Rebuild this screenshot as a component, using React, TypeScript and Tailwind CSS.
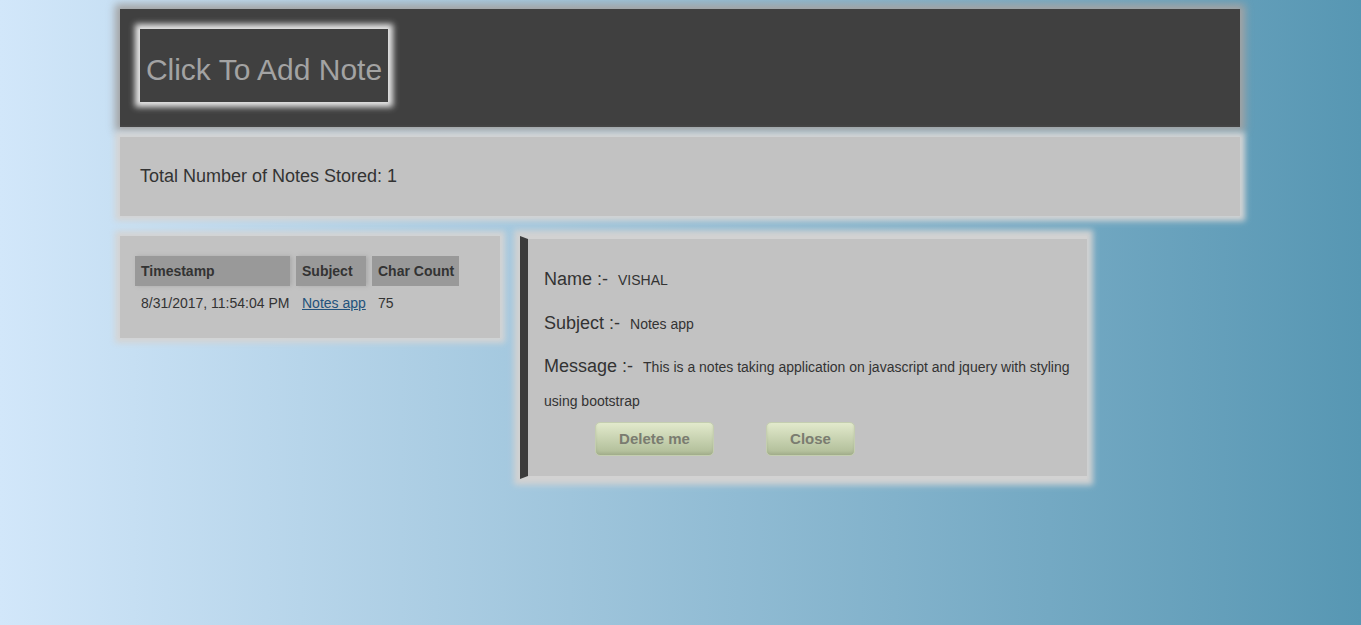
export default function App() {
  const font = { fontFamily: '"Liberation Sans", Arial, sans-serif' };

  return (
    <div
      className="min-h-[625px] w-full bg-gradient-to-r from-[#d2e7fa] to-[#5797b3] pt-[9px]"
      style={font}
    >
      <div className="ml-[120px] w-[1120px]">
        {/* header */}
        <div className="h-[118px] bg-[#404040] shadow-[0_0_8px_5px_#a3a3a3] px-5 pt-5">
          <button className="h-[73px] w-[248px] bg-[#404040] text-[30px] text-[#a3a3a3] pt-2 shadow-[0_0_6px_5px_#e6e6e6]">
            Click To Add Note
          </button>
        </div>

        {/* count */}
        <div className="mt-[10px] h-[79px] bg-[#c2c2c2] shadow-[0_0_6px_5px_#d4d4d4] flex items-center px-5">
          <span className="text-[18px] text-[#333]">Total Number of Notes Stored: 1</span>
        </div>

        <div className="mt-5 flex items-start">
          {/* list */}
          <div className="w-[380px] h-[102px] bg-[#c2c2c2] shadow-[0_0_6px_5px_#d4d4d4] pl-[15px] pt-5 whitespace-nowrap">
            <div className="flex gap-[6px] text-[14px] font-bold text-[#333]">
              <div className="w-[155px] h-[30px] bg-[#999] flex items-center px-[6px] shadow-[2px_0_4px_#aaa]">Timestamp</div>
              <div className="w-[70px] h-[30px] bg-[#999] flex items-center px-[6px] shadow-[2px_0_4px_#aaa]">Subject</div>
              <div className="w-[87px] h-[30px] bg-[#999] flex items-center px-[6px]">Char Count</div>
            </div>
            <div className="flex gap-[6px] text-[14px] text-[#333] mt-[7px]">
              <div className="w-[155px] px-[6px]">8/31/2017, 11:54:04 PM</div>
              <div className="w-[70px] px-[6px]">
                <a className="underline text-[#23527c]" href="#">Notes app</a>
              </div>
              <div className="w-[87px] px-[6px]">75</div>
            </div>
          </div>

          {/* detail */}
          <div className="ml-5 w-[567px] h-[243px] bg-[#c2c2c2] border-l-[8px] border-l-[#3c3c3c] border-y-[3px] border-y-[#d2d2d2] border-r-0 shadow-[0_0_6px_6px_#d2d2d2] pl-4 pr-4 pt-[27px] text-[#333]">
            <div className="flex items-baseline h-[26px]">
              <span className="text-[18px]">Name :-</span>
              <span className="text-[14px] ml-[10px]">VISHAL</span>
            </div>
            <div className="flex items-baseline h-[26px] mt-[18px]">
              <span className="text-[18px]">Subject :-</span>
              <span className="text-[14px] ml-[10px]">Notes app</span>
            </div>
            <div className="mt-[13px] leading-[34px]">
              <span className="text-[18px]">Message :-</span>
              <span className="text-[14px] ml-[10px]">
                This is a notes taking application on javascript and jquery with styling using bootstrap
              </span>
            </div>
            <div className="flex mt-[4px] pl-[51px] gap-[52px]">
              <button className="w-[119px] h-[34px] rounded-[5px] bg-gradient-to-b from-[#e2eacc] to-[#aebb96] border border-[#c4ceb0] text-[15px] font-bold text-[#7a7c70] shadow-[inset_0_-2px_3px_rgba(0,0,0,0.08)]">
                Delete me
              </button>
              <button className="w-[89px] h-[34px] rounded-[5px] bg-gradient-to-b from-[#e2eacc] to-[#aebb96] border border-[#c4ceb0] text-[15px] font-bold text-[#7a7c70] shadow-[inset_0_-2px_3px_rgba(0,0,0,0.08)]">
                Close
              </button>
            </div>
          </div>
        </div>
      </div>
    </div>
  );
}
